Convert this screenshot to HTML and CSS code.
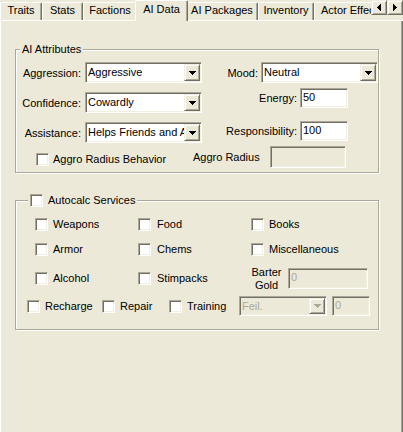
FILE: index.html
```html
<!DOCTYPE html>
<html lang="en">
<head>
<meta charset="utf-8">
<title>AI Data</title>
<link rel="stylesheet" href="styles.css">
</head>
<body>
<div class="tabrow">
  <div class="tabview">
    <div class="tab w-traits">Traits</div>
    <div class="tab w-stats">Stats</div>
    <div class="tab w-factions">Factions</div>
    <div class="tab w-aidata selected">AI Data</div>
    <div class="tab w-aipackages">AI Packages</div>
    <div class="tab w-inventory">Inventory</div>
    <div class="tab w-actor">Actor Effects</div>
  </div>
  <div class="spin">
    <div class="raised spinbtn"><svg class="glyph" width="4" height="7" viewBox="0 0 4 7"><path d="M3 0h1v7h-1z M2 1h1v5h-1z M1 2h1v3h-1z M0 3h1v1h-1z"/></svg></div>
    <div class="raised spinbtn"><svg class="glyph" width="4" height="7" viewBox="0 0 4 7"><path d="M0 0h1v7h-1z M1 1h1v5h-1z M2 2h1v3h-1z M3 3h1v1h-1z"/></svg></div>
  </div>
</div>

<div class="panel">
  <fieldset class="group g1">
    <legend>AI Attributes</legend>
    <div class="g1-body">
      <div class="col-left">
        <div class="row r-a">
          <span class="lbl lbl-left">Aggression:</span>
          <div class="combo sunken combo-wide"><span class="ctext">Aggressive</span><span class="raised dropbtn"><svg class="glyph" width="7" height="4" viewBox="0 0 7 4"><path d="M0 0h7v1h-7z M1 1h5v1h-5z M2 2h3v1h-3z M3 3h1v1h-1z"/></svg></span></div>
        </div>
        <div class="row r-b">
          <span class="lbl lbl-left">Confidence:</span>
          <div class="combo sunken combo-wide"><span class="ctext">Cowardly</span><span class="raised dropbtn"><svg class="glyph" width="7" height="4" viewBox="0 0 7 4"><path d="M0 0h7v1h-7z M1 1h5v1h-5z M2 2h3v1h-3z M3 3h1v1h-1z"/></svg></span></div>
        </div>
        <div class="row r-b">
          <span class="lbl lbl-left">Assistance:</span>
          <div class="combo sunken combo-wide"><span class="ctext">Helps Friends and Allies</span><span class="raised dropbtn"><svg class="glyph" width="7" height="4" viewBox="0 0 7 4"><path d="M0 0h7v1h-7z M1 1h5v1h-5z M2 2h3v1h-3z M3 3h1v1h-1z"/></svg></span></div>
        </div>
        <div class="row r-d">
          <label class="check-item gap4"><span class="chk sunken"></span><span>Aggro Radius Behavior</span></label>
        </div>
      </div>
      <div class="col-right">
        <div class="row rr-mood">
          <span class="lbl lbl-mood">Mood:</span>
          <div class="combo sunken combo-wide"><span class="ctext">Neutral</span><span class="raised dropbtn"><svg class="glyph" width="7" height="4" viewBox="0 0 7 4"><path d="M0 0h7v1h-7z M1 1h5v1h-5z M2 2h3v1h-3z M3 3h1v1h-1z"/></svg></span></div>
        </div>
        <div class="row rr-energy">
          <span class="lbl lbl-num">Energy:</span>
          <div class="edit sunken edit-num">50</div>
        </div>
        <div class="row rr-resp">
          <span class="lbl lbl-num">Responsibility:</span>
          <div class="edit sunken edit-num">100</div>
        </div>
        <div class="row rr-aggro">
          <span class="lbl lbl-aggro">Aggro Radius</span>
          <div class="edit sunken disabled edit-aggro"></div>
        </div>
      </div>
    </div>
  </fieldset>

  <fieldset class="group g2">
    <legend><label class="check-item"><span class="chk sunken"></span><span>Autocalc Services</span></label></legend>
    <div class="svc-grid">
      <label class="check-item"><span class="chk sunken"></span><span>Weapons</span></label>
      <label class="check-item gap6"><span class="chk sunken"></span><span>Food</span></label>
      <label class="check-item"><span class="chk sunken"></span><span>Books</span></label>
      <label class="check-item"><span class="chk sunken"></span><span>Armor</span></label>
      <label class="check-item gap6"><span class="chk sunken"></span><span>Chems</span></label>
      <label class="check-item"><span class="chk sunken"></span><span>Miscellaneous</span></label>
      <label class="check-item"><span class="chk sunken"></span><span>Alcohol</span></label>
      <label class="check-item gap6"><span class="chk sunken"></span><span>Stimpacks</span></label>
      <div class="barter">
        <div class="barter-lbl"><span>Barter</span><span>Gold</span></div>
        <div class="edit sunken disabled edit-barter">0</div>
      </div>
    </div>
    <div class="row-d">
      <label class="check-item ci-recharge"><span class="chk sunken"></span><span>Recharge</span></label>
      <label class="check-item ci-repair"><span class="chk sunken"></span><span>Repair</span></label>
      <label class="check-item ci-training"><span class="chk sunken"></span><span>Training</span></label>
      <div class="combo sunken disabled combo-small"><span class="ctext">Feil.</span><span class="raised dropbtn"><svg class="glyph glyph-off" width="7" height="4" viewBox="0 0 7 4"><path d="M0 0h7v1h-7z M1 1h5v1h-5z M2 2h3v1h-3z M3 3h1v1h-1z"/></svg></span></div>
      <div class="edit sunken disabled edit-small">0</div>
    </div>
  </fieldset>
</div>
</body>
</html>
```

FILE: styles.css
```css
* { box-sizing: border-box; }

html, body { margin: 0; padding: 0; }

body {
  width: 403px;
  height: 432px;
  overflow: hidden;
  background: #ECE9D8;
  font-family: "Liberation Sans", Arial, sans-serif;
  font-size: 11px;
  color: #000;
}

/* 3D borders */
.raised {
  background: #ECE9D8;
  border: 1px solid;
  border-color: #F1EFE2 #716F64 #716F64 #F1EFE2;
  box-shadow: inset 1px 1px #fff, inset -1px -1px #ACA899;
}

.sunken {
  background: #fff;
  border: 1px solid;
  border-color: #ACA899 #fff #fff #ACA899;
  box-shadow: inset 1px 1px #716F64, inset -1px -1px #F1EFE2;
}

.glyph { display: block; fill: #000; shape-rendering: crispEdges; }
.glyph-off { fill: #ACA899; }

/* Tab strip */
.tabrow {
  display: flex;
  height: 21px;
  background: linear-gradient(to top, #fff 0, #fff 1px, transparent 1px);
}

.tabview {
  flex: 1;
  min-width: 0;
  display: flex;
  align-items: flex-start;
  overflow: hidden;
}

.tab {
  flex: none;
  margin-top: 2px;
  height: 18px;
  line-height: 15px;
  text-align: center;
  white-space: nowrap;
  overflow: hidden;
  border-top: 1px solid #fff;
  border-left: 1px solid #fff;
  border-right: 1px solid #716F64;
  border-radius: 2px 2px 0 0;
  box-shadow: inset -1px 0 #ACA899;
}

.tab.selected {
  position: relative;
  z-index: 1;
  margin: 0 -2px;
  height: 21px;
  padding-top: 1px;
  background: #ECE9D8;
}

.w-traits { width: 42px; }
.w-stats { width: 41px; }
.w-factions { width: 54px; }
.w-aidata { width: 53px; }
.w-aipackages { width: 72px; }
.w-inventory { width: 56px; }
.w-actor { width: 80px; text-align: left; padding-left: 6px; }

.spin { display: flex; align-items: flex-start; flex: none; }

.spinbtn {
  width: 16px;
  height: 15px;
  display: flex;
  align-items: center;
  justify-content: center;
}

/* Panel */
.panel {
  height: 411px;
  padding-top: 22px;
  border-left: 1px solid #fff;
  border-right: 1px solid #716F64;
  box-shadow: inset -1px 0 #ACA899;
}

.group {
  margin: 0 0 0 14px;
  width: 364px;
  min-inline-size: 0;
  padding: 0;
  border: 1px solid #ACA899;
  box-shadow: inset 1px 1px #fff, 1px 1px #fff;
}

.group legend {
  margin-left: 4px;
  padding: 0 2px;
  line-height: 13px;
  background: #ECE9D8;
}

.g1 { padding-bottom: 4px; }

.g2 {
  margin-top: 21px;
  padding-bottom: 13px;
}

.g2 legend { margin-left: 12px; }

/* Group 1 */
.g1-body { display: flex; align-items: flex-start; }

.col-left { width: 186px; }
.col-right { width: 176px; }

.row { display: flex; align-items: center; }

.lbl { text-align: right; white-space: nowrap; flex: none; }

.lbl-left { width: 65px; margin-right: 4px; }
.lbl-mood { width: 56px; margin-right: 3px; }
.lbl-num { width: 95px; margin-right: 3px; }
.lbl-aggro { width: 66px; margin-left: -9px; margin-right: 11px; }

.r-a { margin-top: 6px; }
.r-b { margin-top: 9px; }
.r-d { margin-top: 10px; padding-left: 20px; height: 13px; }

.rr-mood { margin-top: 6px; }
.rr-energy { margin-top: 5px; }
.rr-resp { margin-top: 13px; }
.rr-aggro { margin-top: 5px; }

/* Controls */
.combo {
  display: flex;
  flex: none;
  height: 21px;
  padding: 1px;
}

.combo-wide { width: 117px; }
.combo-small { width: 88px; height: 20px; margin-right: 5px; }

.ctext {
  flex: 1;
  min-width: 0;
  padding-left: 1px;
  line-height: 17px;
  white-space: nowrap;
  overflow: hidden;
}

.combo-small .ctext { line-height: 16px; }

.dropbtn {
  flex: none;
  width: 16px;
  display: flex;
  align-items: center;
  justify-content: center;
}

.edit {
  flex: none;
  height: 20px;
  padding: 1px 0 0 2px;
  line-height: 15px;
  white-space: nowrap;
  overflow: hidden;
}

.edit-num { width: 48px; }
.edit-aggro { width: 76px; height: 22px; }
.edit-barter { width: 80px; height: 21px; margin-left: 6px; }
.edit-small { width: 38px; }

.disabled { background: #ECE9D8; color: #ACA899; }

.check-item {
  display: flex;
  align-items: center;
  gap: 5px;
  white-space: nowrap;
  line-height: 13px;
}

.gap4 { gap: 4px; }
.gap6 { gap: 6px; }

.chk {
  display: block;
  flex: none;
  width: 13px;
  height: 13px;
}

/* Group 2 */
.svc-grid {
  display: grid;
  grid-template-columns: 103px 113px 1fr;
  grid-template-rows: 13px 13px 21px;
  row-gap: 12px;
  align-items: center;
  margin: 11px 0 0 19px;
}

.barter { display: flex; align-items: center; height: 21px; }

.barter-lbl {
  width: 31px;
  height: 21px;
  display: flex;
  flex-direction: column;
  justify-content: center;
  align-items: center;
  line-height: 13px;
  flex: none;
}

.row-d {
  display: flex;
  align-items: center;
  height: 20px;
  margin: 7px 0 0 11px;
}

.ci-recharge { width: 75px; }
.ci-repair { width: 67px; }
.ci-training { width: 70px; }
```
